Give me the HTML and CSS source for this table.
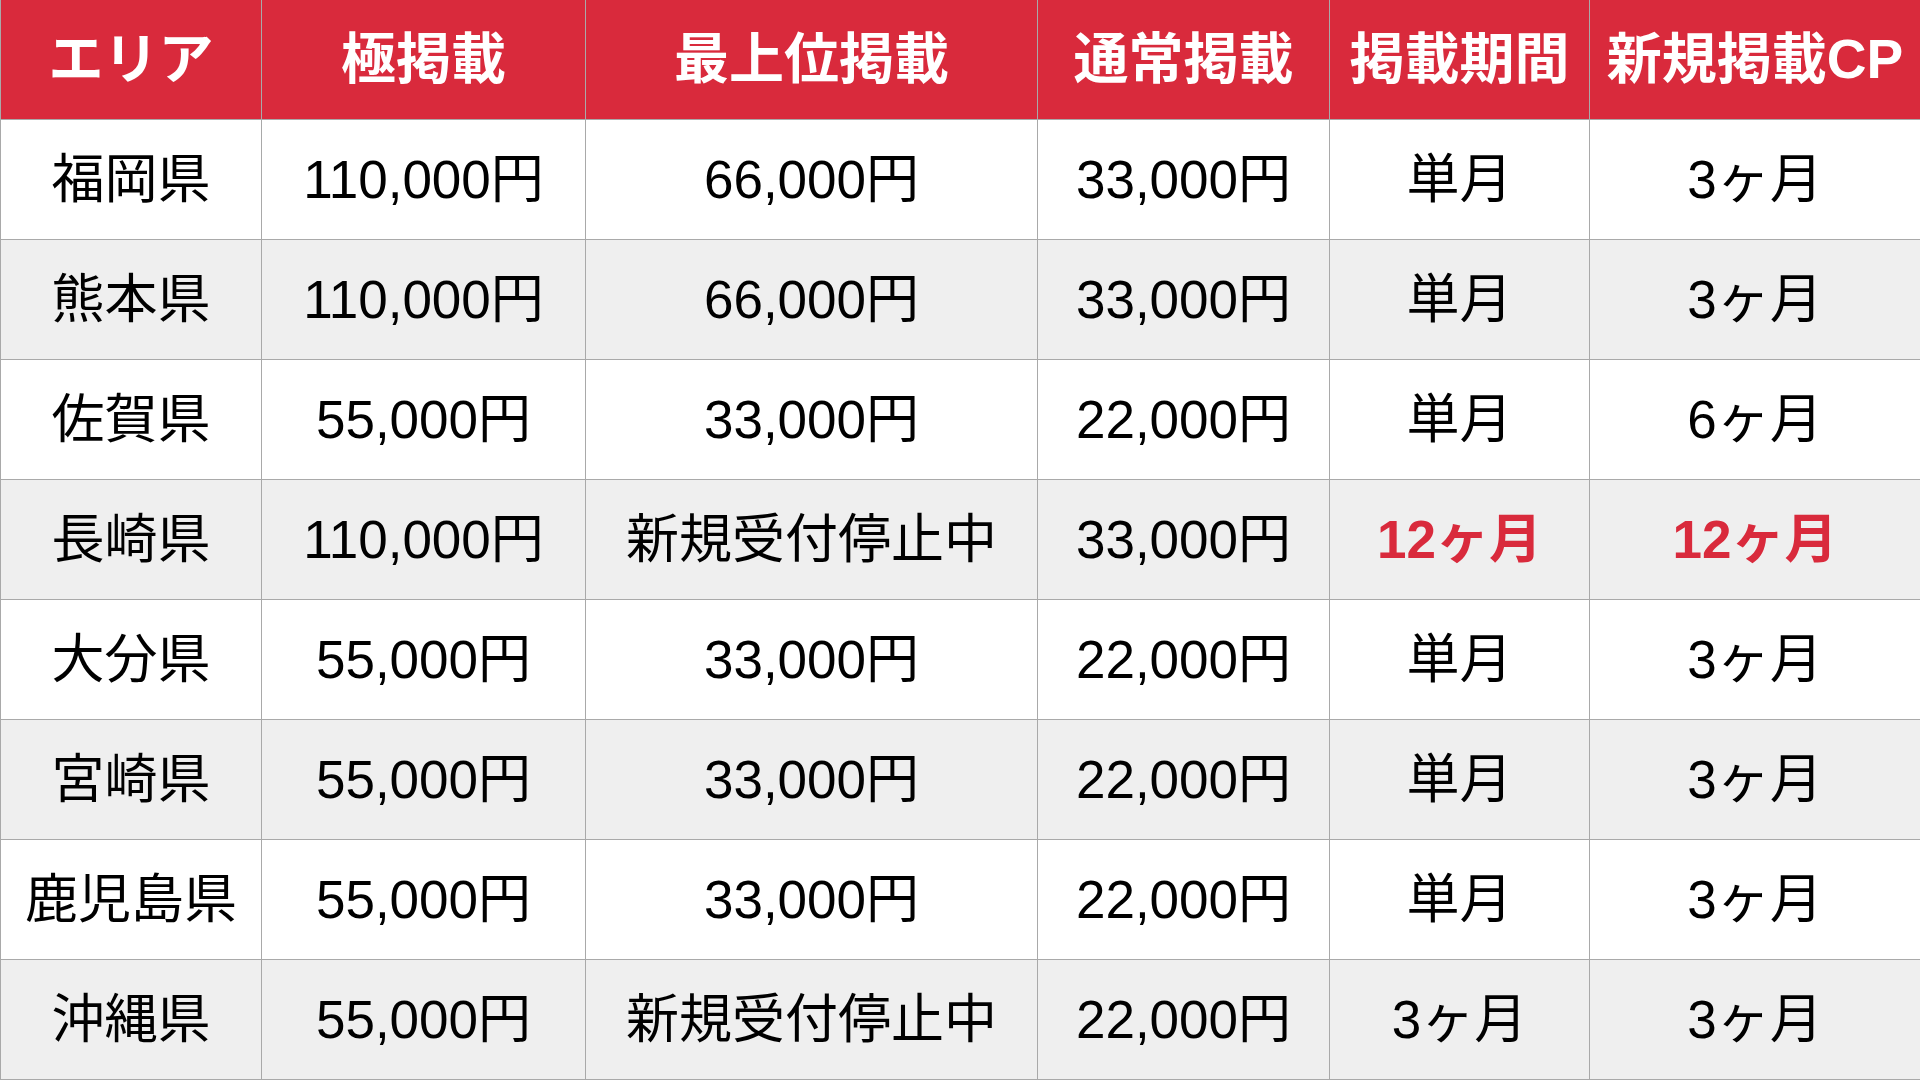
FILE: index.html
```html
<!DOCTYPE html>
<html lang="ja">
<head>
<meta charset="utf-8">
<title>掲載料金表</title>
<link rel="stylesheet" href="styles.css">
</head>
<body>
<div class="table">
  <div class="cell head">エリア</div>
  <div class="cell head">極掲載</div>
  <div class="cell head">最上位掲載</div>
  <div class="cell head">通常掲載</div>
  <div class="cell head">掲載期間</div>
  <div class="cell head">新規掲載CP</div>

  <div class="cell">福岡県</div>
  <div class="cell">110,000円</div>
  <div class="cell">66,000円</div>
  <div class="cell">33,000円</div>
  <div class="cell">単月</div>
  <div class="cell">3ヶ月</div>

  <div class="cell alt">熊本県</div>
  <div class="cell alt">110,000円</div>
  <div class="cell alt">66,000円</div>
  <div class="cell alt">33,000円</div>
  <div class="cell alt">単月</div>
  <div class="cell alt">3ヶ月</div>

  <div class="cell">佐賀県</div>
  <div class="cell">55,000円</div>
  <div class="cell">33,000円</div>
  <div class="cell">22,000円</div>
  <div class="cell">単月</div>
  <div class="cell">6ヶ月</div>

  <div class="cell alt">長崎県</div>
  <div class="cell alt">110,000円</div>
  <div class="cell alt">新規受付停止中</div>
  <div class="cell alt">33,000円</div>
  <div class="cell alt accent">12ヶ月</div>
  <div class="cell alt accent">12ヶ月</div>

  <div class="cell">大分県</div>
  <div class="cell">55,000円</div>
  <div class="cell">33,000円</div>
  <div class="cell">22,000円</div>
  <div class="cell">単月</div>
  <div class="cell">3ヶ月</div>

  <div class="cell alt">宮崎県</div>
  <div class="cell alt">55,000円</div>
  <div class="cell alt">33,000円</div>
  <div class="cell alt">22,000円</div>
  <div class="cell alt">単月</div>
  <div class="cell alt">3ヶ月</div>

  <div class="cell">鹿児島県</div>
  <div class="cell">55,000円</div>
  <div class="cell">33,000円</div>
  <div class="cell">22,000円</div>
  <div class="cell">単月</div>
  <div class="cell">3ヶ月</div>

  <div class="cell alt">沖縄県</div>
  <div class="cell alt">55,000円</div>
  <div class="cell alt">新規受付停止中</div>
  <div class="cell alt">22,000円</div>
  <div class="cell alt">3ヶ月</div>
  <div class="cell alt">3ヶ月</div>
</div>
</body>
</html>
```

FILE: styles.css
```css
html, body {
  margin: 0;
  padding: 0;
  background: #ffffff;
}

body {
  font-family: "Liberation Sans", "Noto Sans CJK JP", sans-serif;
  width: 1920px;
  height: 1080px;
  overflow: hidden;
}

.table {
  display: grid;
  grid-template-columns: 260px 323px 451px 291px 259px 330px;
  grid-auto-rows: 119px;
  gap: 1px;
  padding: 0 0 1px 1px;
  background: #a9a9a9;
  width: 1920px;
  box-sizing: border-box;
}

.cell {
  display: flex;
  align-items: center;
  justify-content: center;
  background: #ffffff;
  color: #000000;
  font-size: 53px;
  line-height: 1;
  white-space: nowrap;
}

.cell.alt {
  background: #efefef;
}

.cell.head {
  background: #d92a3c;
  color: #ffffff;
  font-weight: 700;
  font-size: 55px;
}

.cell.accent {
  color: #d92a3c;
  font-weight: 700;
}
```
